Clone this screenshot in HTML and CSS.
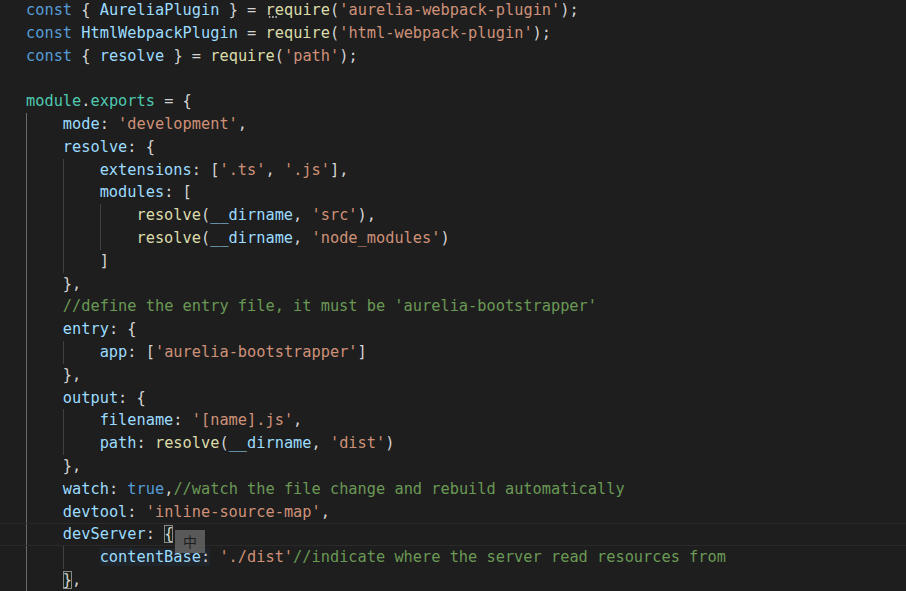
FILE: index.html
```html
<!DOCTYPE html>
<html lang="en">
<head>
    <meta charset="UTF-8">
    <title>webpack.config.js</title>
    <link rel="stylesheet" href="styles.css">
</head>
<body>
    <div class="editor">
        <div class="line"><span class="kw">const</span> <span class="p">{</span> <span class="var">AureliaPlugin</span> <span class="p">}</span> <span class="p">=</span> <span class="fn hint">r</span><span class="fn">equire</span><span class="p">(</span><span class="str">'aurelia-webpack-plugin'</span><span class="p">);</span></div>
        <div class="line"><span class="kw">const</span> <span class="var">HtmlWebpackPlugin</span> <span class="p">=</span> <span class="fn">require</span><span class="p">(</span><span class="str">'html-webpack-plugin'</span><span class="p">);</span></div>
        <div class="line"><span class="kw">const</span> <span class="p">{</span> <span class="var">resolve</span> <span class="p">}</span> <span class="p">=</span> <span class="fn">require</span><span class="p">(</span><span class="str">'path'</span><span class="p">);</span></div>
        <div class="line"></div>
        <div class="line"><span class="mod">module</span><span class="p">.</span><span class="mod">exports</span> <span class="p">=</span> <span class="p">{</span></div>
        <div class="line"><span class="ind on"></span><span class="var">mode</span><span class="p">:</span> <span class="str">'development'</span><span class="p">,</span></div>
        <div class="line"><span class="ind on"></span><span class="var">resolve</span><span class="p">:</span> <span class="p">{</span></div>
        <div class="line"><span class="ind on"></span><span class="ind"></span><span class="var">extensions</span><span class="p">:</span> <span class="p">[</span><span class="str">'.ts'</span><span class="p">,</span> <span class="str">'.js'</span><span class="p">],</span></div>
        <div class="line"><span class="ind on"></span><span class="ind"></span><span class="var">modules</span><span class="p">:</span> <span class="p">[</span></div>
        <div class="line"><span class="ind on"></span><span class="ind"></span><span class="ind"></span><span class="fn">resolve</span><span class="p">(</span><span class="var">__dirname</span><span class="p">,</span> <span class="str">'src'</span><span class="p">),</span></div>
        <div class="line"><span class="ind on"></span><span class="ind"></span><span class="ind"></span><span class="fn">resolve</span><span class="p">(</span><span class="var">__dirname</span><span class="p">,</span> <span class="str">'node_modules'</span><span class="p">)</span></div>
        <div class="line"><span class="ind on"></span><span class="ind"></span><span class="p">]</span></div>
        <div class="line"><span class="ind on"></span><span class="p">},</span></div>
        <div class="line"><span class="ind on"></span><span class="com">//define the entry file, it must be 'aurelia-bootstrapper'</span></div>
        <div class="line"><span class="ind on"></span><span class="var">entry</span><span class="p">:</span> <span class="p">{</span></div>
        <div class="line"><span class="ind on"></span><span class="ind"></span><span class="var">app</span><span class="p">:</span> <span class="p">[</span><span class="str">'aurelia-bootstrapper'</span><span class="p">]</span></div>
        <div class="line"><span class="ind on"></span><span class="p">},</span></div>
        <div class="line"><span class="ind on"></span><span class="var">output</span><span class="p">:</span> <span class="p">{</span></div>
        <div class="line"><span class="ind on"></span><span class="ind"></span><span class="var">filename</span><span class="p">:</span> <span class="str">'[name].js'</span><span class="p">,</span></div>
        <div class="line"><span class="ind on"></span><span class="ind"></span><span class="var">path</span><span class="p">:</span> <span class="fn">resolve</span><span class="p">(</span><span class="var">__dirname</span><span class="p">,</span> <span class="str">'dist'</span><span class="p">)</span></div>
        <div class="line"><span class="ind on"></span><span class="p">},</span></div>
        <div class="line"><span class="ind on"></span><span class="var">watch</span><span class="p">:</span> <span class="kw">true</span><span class="p">,</span><span class="com">//watch the file change and rebuild automatically</span></div>
        <div class="line"><span class="ind on"></span><span class="var">devtool</span><span class="p">:</span> <span class="str">'inline-source-map'</span><span class="p">,</span></div>
        <div class="line current"><span class="ind on"></span><span class="var">devServer</span><span class="p">:</span> <span class="p match">{</span></div>
        <div class="line"><span class="ind on"></span><span class="ind"></span><span class="compose"><span class="var">contentBase</span><span class="p">:</span></span> <span class="str">'./dist'</span><span class="com">//indicate where the server read resources from</span><span class="ime">中</span></div>
        <div class="line"><span class="ind on"></span><span class="p match">}</span><span class="p">,</span></div>
    </div>
</body>
</html>
```

FILE: styles.css
```css
body {
    margin: 0;
    height: 591px;
    background-color: #1e1e1e;
    overflow: hidden;
}

.editor {
    margin-top: -1px;
    font-family: 'DejaVu Sans Mono', 'Liberation Mono', monospace;
    font-size: 15.3px;
    color: #d4d4d4;
}

.line {
    position: relative;
    box-sizing: border-box;
    height: 22.8px;
    line-height: 22.8px;
    padding-left: 26px;
    white-space: pre;
}

.line.current {
    border-top: 1px solid #2a2a2a;
    border-bottom: 1px solid #2a2a2a;
    line-height: 20.8px;
}

/* indent guides, one per 4 columns */
.ind {
    display: inline-block;
    width: 4ch;
    height: 22.8px;
    vertical-align: top;
    box-shadow: inset 1px 0 0 #404040;
}

.ind.on {
    box-shadow: inset 1px 0 0 #6a6a6a;
}

.current .ind {
    height: 20.8px;
}

.kw { color: #569cd6; }
.var { color: #9cdcfe; }
.fn { color: #dcdcaa; }
.str { color: #ce9178; }
.com { color: #6a9955; }
.mod { color: #4ec9b0; }
.p { color: #d4d4d4; }

.hint {
    position: relative;
}

.hint::after {
    content: '';
    position: absolute;
    left: 2px;
    bottom: 1px;
    width: 10px;
    height: 2px;
    background-image: radial-gradient(circle, #a0a0a0 0.8px, transparent 1.1px);
    background-size: 3.3px 2px;
}

.match {
    box-shadow: inset 0 0 0 1px #8a8a8a;
    background-color: rgba(0, 100, 0, 0.1);
}

.compose {
    background-color: #1f252b;
}

.ime {
    position: absolute;
    left: 175px;
    top: -16px;
    width: 30px;
    height: 23px;
    background-color: rgba(110, 110, 110, 0.75);
    color: #1e1e1e;
    font-family: 'Noto Sans CJK SC', sans-serif;
    font-size: 14px;
    line-height: 23px;
    text-align: center;
}
```
